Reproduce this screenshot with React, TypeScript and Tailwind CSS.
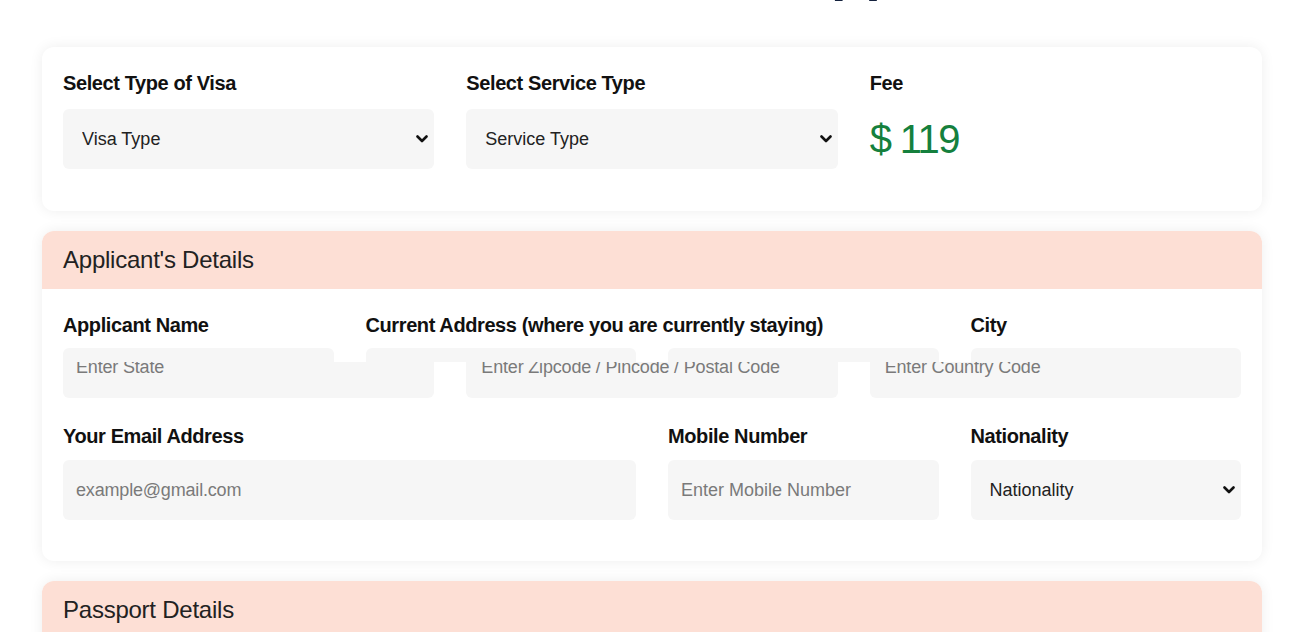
import React from "react";

const Chevron = () => (
    <svg width="12" height="8" viewBox="0 0 12 8" className="pointer-events-none absolute right-[6px] top-1/2 -translate-y-1/2">
        <polyline points="1.5,1.5 6,6 10.5,1.5" fill="none" stroke="#111" strokeWidth="2.6" strokeLinecap="round" strokeLinejoin="round" />
    </svg>
)

const SelectBox = ({ value, className = "" }: { value: string; className?: string }) => (
    <div className={`relative h-[60px] ${className}`}>
        <select className="h-full w-full appearance-none rounded-md bg-[#f6f6f6] pl-[19px] text-[18px] text-[#222] outline-none">
            <option>{value}</option>
        </select>
        <Chevron />
    </div>
)

const Label = ({ children }: { children: React.ReactNode }) => (
    <p className="whitespace-nowrap text-[20px] font-bold leading-[28px] tracking-[-0.02em] text-[#111]">{children}</p>
)

const App = () => {
    return (
        <div className="h-screen overflow-hidden bg-white" style={{ fontFamily: '"Liberation Sans", Arial, sans-serif' }}>
            {/* page title, scrolled almost out of view */}
            <h1 className="ml-[663px] mt-[-58px] text-[56px] font-bold leading-none text-[#14213d]">Visa Application</h1>

            <div className="ml-[42px] mt-[49px] flex w-[1220px] flex-col gap-5">
                {/* Visa / Service / Fee */}
                <div className="rounded-xl bg-white px-[21px] pb-[42px] pt-[22px] shadow-[0_0_14px_rgba(0,0,0,0.07)]">
                    <div className="grid grid-cols-3 gap-x-8">
                        <div>
                            <Label>Select Type of Visa</Label>
                            <SelectBox value="Visa Type" className="mt-3" />
                        </div>
                        <div>
                            <Label>Select Service Type</Label>
                            <SelectBox value="Service Type" className="mt-3" />
                        </div>
                        <div>
                            <Label>Fee</Label>
                            <p className="mt-3 flex h-[60px] items-center text-[40px] tracking-[-0.04em] text-[#15803d]">$ 119</p>
                        </div>
                    </div>
                </div>

                {/* Applicant's Details */}
                <div className="overflow-hidden rounded-xl bg-white shadow-[0_0_14px_rgba(0,0,0,0.07)]">
                    <div className="flex h-[58px] items-center bg-[#fddfd5] px-[21px]">
                        <h2 className="text-[24px] tracking-[-0.01em] text-[#222]">Applicant's Details</h2>
                    </div>
                    <div className="px-[21px] pb-[41px] pt-[22px]">
                        <div className="grid grid-cols-4 gap-x-8">
                            <Label>Applicant Name</Label>
                            <Label>Current Address (where you are currently staying)</Label>
                            <div />
                            <Label>City</Label>
                        </div>
                        <div className="mt-[9px] grid grid-cols-4 gap-x-8">
                            <div className="h-[14px] rounded-t-md bg-[#f6f6f6]" />
                            <div className="h-[14px] rounded-t-md bg-[#f6f6f6]" />
                            <div className="h-[14px] rounded-t-md bg-[#f6f6f6]" />
                            <div className="h-[14px] rounded-t-md bg-[#f6f6f6]" />
                        </div>
                        <div className="grid grid-cols-3 gap-x-8">
                            {["Enter State", "Enter Zipcode / Pincode / Postal Code", "Enter Country Code"].map((ph, i) => (
                                <div key={ph} className={`h-[36px] overflow-hidden rounded-b-md bg-[#f6f6f6] ${i === 0 ? "pl-[13px]" : "pl-[15px]"}`}>
                                    <p className="mt-[-7px] text-[18px] leading-[24px] tracking-[-0.01em] text-[#7a7a7a]">{ph}</p>
                                </div>
                            ))}
                        </div>

                        <div className="mt-6 grid grid-cols-4 gap-x-8">
                            <div className="col-span-2">
                                <Label>Your Email Address</Label>
                                <input placeholder="example@gmail.com" className="mt-[10px] h-[60px] w-full rounded-md bg-[#f6f6f6] px-[13px] text-[18px] tracking-[-0.01em] outline-none placeholder:text-[#7a7a7a]" />
                            </div>
                            <div>
                                <Label>Mobile Number</Label>
                                <input placeholder="Enter Mobile Number" className="mt-[10px] h-[60px] w-full rounded-md bg-[#f6f6f6] px-[13px] text-[18px] outline-none placeholder:text-[#7a7a7a]" />
                            </div>
                            <div>
                                <Label>Nationality</Label>
                                <SelectBox value="Nationality" className="mt-[10px]" />
                            </div>
                        </div>
                    </div>
                </div>

                {/* Passport Details */}
                <div className="overflow-hidden rounded-xl bg-white shadow-[0_0_14px_rgba(0,0,0,0.07)]">
                    <div className="flex h-[58px] items-center bg-[#fddfd5] px-[21px]">
                        <h2 className="text-[24px] tracking-[-0.01em] text-[#222]">Passport Details</h2>
                    </div>
                    <div className="h-[200px]" />
                </div>
            </div>
        </div>
    );
};

export default App;
